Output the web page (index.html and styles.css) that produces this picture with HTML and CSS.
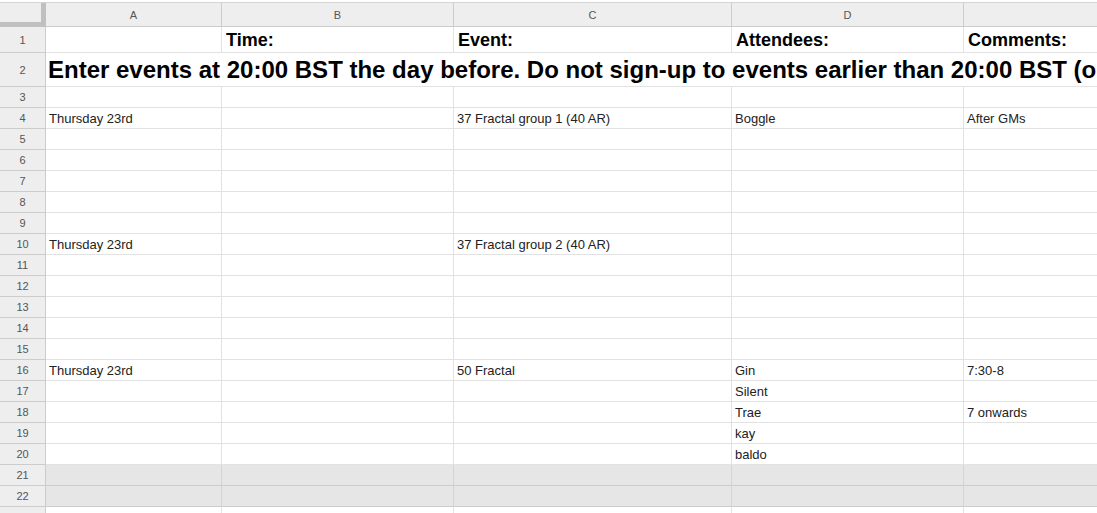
FILE: index.html
```html
<!DOCTYPE html>
<html lang="en">
<head>
    <meta charset="UTF-8">
    <title>Events sign-up</title>
    <link rel="stylesheet" href="styles.css">
</head>
<body>
    <div class="sheet">
        <!-- column headers -->
        <div class="corner"></div>
        <div class="col-head">A</div>
        <div class="col-head">B</div>
        <div class="col-head">C</div>
        <div class="col-head">D</div>
        <div class="col-head"></div>

        <div class="row-num">1</div>
        <div class="cell"></div>
        <div class="cell title">Time:</div>
        <div class="cell title">Event:</div>
        <div class="cell title">Attendees:</div>
        <div class="cell title">Comments:</div>

        <div class="row-num">2</div>
        <div class="cell notice">Enter events at 20:00 BST the day before. Do not sign-up to events earlier than 20:00 BST (o</div>

        <div class="row-num">3</div>
        <div class="cell"></div><div class="cell"></div><div class="cell"></div><div class="cell"></div><div class="cell"></div>

        <div class="row-num">4</div>
        <div class="cell">Thursday 23rd</div><div class="cell"></div><div class="cell">37 Fractal group 1 (40 AR)</div><div class="cell">Boggle</div><div class="cell">After GMs</div>

        <div class="row-num">5</div>
        <div class="cell"></div><div class="cell"></div><div class="cell"></div><div class="cell"></div><div class="cell"></div>
        <div class="row-num">6</div>
        <div class="cell"></div><div class="cell"></div><div class="cell"></div><div class="cell"></div><div class="cell"></div>
        <div class="row-num">7</div>
        <div class="cell"></div><div class="cell"></div><div class="cell"></div><div class="cell"></div><div class="cell"></div>
        <div class="row-num">8</div>
        <div class="cell"></div><div class="cell"></div><div class="cell"></div><div class="cell"></div><div class="cell"></div>
        <div class="row-num">9</div>
        <div class="cell"></div><div class="cell"></div><div class="cell"></div><div class="cell"></div><div class="cell"></div>

        <div class="row-num">10</div>
        <div class="cell">Thursday 23rd</div><div class="cell"></div><div class="cell">37 Fractal group 2 (40 AR)</div><div class="cell"></div><div class="cell"></div>

        <div class="row-num">11</div>
        <div class="cell"></div><div class="cell"></div><div class="cell"></div><div class="cell"></div><div class="cell"></div>
        <div class="row-num">12</div>
        <div class="cell"></div><div class="cell"></div><div class="cell"></div><div class="cell"></div><div class="cell"></div>
        <div class="row-num">13</div>
        <div class="cell"></div><div class="cell"></div><div class="cell"></div><div class="cell"></div><div class="cell"></div>
        <div class="row-num">14</div>
        <div class="cell"></div><div class="cell"></div><div class="cell"></div><div class="cell"></div><div class="cell"></div>
        <div class="row-num">15</div>
        <div class="cell"></div><div class="cell"></div><div class="cell"></div><div class="cell"></div><div class="cell"></div>

        <div class="row-num">16</div>
        <div class="cell">Thursday 23rd</div><div class="cell"></div><div class="cell">50 Fractal</div><div class="cell">Gin</div><div class="cell">7:30-8</div>
        <div class="row-num">17</div>
        <div class="cell"></div><div class="cell"></div><div class="cell"></div><div class="cell">Silent</div><div class="cell"></div>
        <div class="row-num">18</div>
        <div class="cell"></div><div class="cell"></div><div class="cell"></div><div class="cell">Trae</div><div class="cell">7 onwards</div>
        <div class="row-num">19</div>
        <div class="cell"></div><div class="cell"></div><div class="cell"></div><div class="cell">kay</div><div class="cell"></div>
        <div class="row-num">20</div>
        <div class="cell"></div><div class="cell"></div><div class="cell"></div><div class="cell">baldo</div><div class="cell"></div>

        <div class="row-num">21</div>
        <div class="cell shaded"></div><div class="cell shaded"></div><div class="cell shaded"></div><div class="cell shaded"></div><div class="cell shaded"></div>
        <div class="row-num">22</div>
        <div class="cell shaded"></div><div class="cell shaded"></div><div class="cell shaded"></div><div class="cell shaded"></div><div class="cell shaded"></div>

        <!-- next row, only its top edge is in view -->
        <div class="row-num"></div>
        <div class="cell"></div><div class="cell"></div><div class="cell"></div><div class="cell"></div><div class="cell"></div>
    </div>
</body>
</html>
```

FILE: styles.css
```css
body {
    margin: 0;
    overflow: hidden;
    background: #fff;
    font-family: "Liberation Sans", Arial, sans-serif;
}

.sheet {
    display: grid;
    grid-template-columns: 46px 176px 232px 278px 232px 320px;
    grid-template-rows: 24px 26px 34px repeat(21, 21px);
    width: 1284px;
    margin-top: 2px;
    border-top: 1px solid #d4d4d4;
}

.corner,
.col-head,
.row-num {
    background: #eeeeee;
    border-right: 1px solid #cccccc;
    border-bottom: 1px solid #cccccc;
    box-sizing: border-box;
    color: #555;
    font-size: 11px;
    display: flex;
    align-items: center;
    justify-content: center;
}

.corner {
    border-right: 5px solid #c0c0c0;
    border-bottom: 5px solid #c0c0c0;
}

.cell {
    border-right: 1px solid #e2e2e2;
    border-bottom: 1px solid #e2e2e2;
    box-sizing: border-box;
    padding: 0 3px 2px;
    font-size: 13px;
    color: #222;
    white-space: nowrap;
    display: flex;
    align-items: flex-end;
}

.title {
    font-size: 18px;
    font-weight: bold;
    color: #000;
    padding-left: 4px;
    padding-bottom: 1px;
}

.notice {
    grid-column: 2 / 7;
    font-size: 24px;
    font-weight: bold;
    color: #000;
    overflow: hidden;
    padding-left: 2px;
}

.shaded {
    background: #e6e6e6;
    border-bottom-color: #cccccc;
    border-right-color: #d4d4d4;
}
```
